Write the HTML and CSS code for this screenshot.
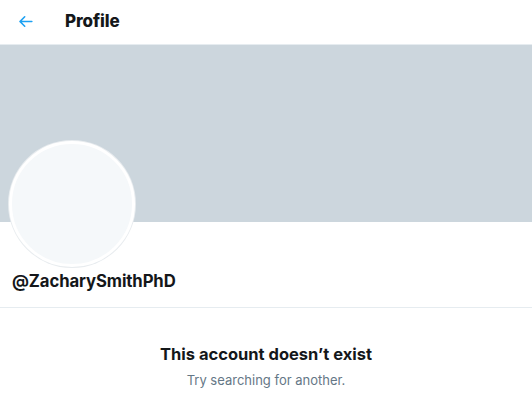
FILE: index.html
```html
<!DOCTYPE html>
<html>
<head>
<meta charset="utf-8">
<link rel="stylesheet" href="styles.css">
</head>
<body>
<div class="page">
  <header class="topbar">
    <span class="back">
      <svg viewBox="0 0 24 24" width="19" height="19"><path fill="#1da1f2" d="M20 11H7.414l4.293-4.293a1 1 0 0 0-1.414-1.414l-6 6a1 1 0 0 0 0 1.414l6 6a.996.996 0 0 0 1.414 0 1 1 0 0 0 0-1.414L7.414 13H20a1 1 0 1 0 0-2z"/></svg>
    </span>
    <h1 class="title">Profile</h1>
  </header>
  <div class="banner"></div>
  <div class="profile">
    <div class="avatar"></div>
    <div class="handle">@ZacharySmithPhD</div>
  </div>
  <div class="empty">
    <div class="empty-title">This account doesn’t exist</div>
    <div class="empty-sub">Try searching for another.</div>
  </div>
</div>
</body>
</html>
```
FILE: styles.css
```css
html, body {
  margin: 0;
  padding: 0;
  background: #fff;
}
body {
  font-family: Inter, "Noto Sans", "Liberation Sans", sans-serif;
  color: #14171a;
}
.page {
  width: 532px;
}
.topbar {
  height: 44px;
  display: flex;
  align-items: center;
  border-bottom: 1px solid #e6ecf0;
  padding-left: 16px;
}
.back {
  width: 19px;
  height: 19px;
  display: flex;
  margin-right: 30px;
  margin-top: -2px;
}
.title {
  margin: 0;
  font-size: 17px;
  font-weight: 800;
  letter-spacing: -0.1px;
  margin-top: -3px;
}
.banner {
  height: 177px;
  background: #ccd6dd;
}
.profile {
  display: flex;
  flex-direction: column;
  align-items: flex-start;
  padding: 0 12px;
  border-bottom: 1px solid #e6ecf0;
  height: 85px;
}
.avatar {
  width: 120px;
  height: 120px;
  border-radius: 50%;
  background: #f5f8fa;
  border: 3px solid #fff;
  box-shadow: 0 0 0 1px #e8ecef;
  margin-top: -81px;
  margin-left: -3px;
}
.handle {
  margin-top: 4px;
  font-size: 16.7px;
  font-weight: 700;
  letter-spacing: -0.1px;
}
.empty {
  text-align: center;
  padding-top: 36px;
}
.empty-title {
  font-size: 16.5px;
  font-weight: 700;
}
.empty-sub {
  margin-top: 8px;
  font-size: 13px;
  color: #657786;
}
```
